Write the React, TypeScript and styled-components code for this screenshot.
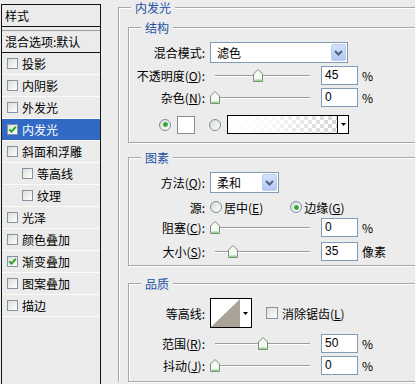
import React from 'react';
import styled, { createGlobalStyle } from 'styled-components';

const BG = '#ececec';

const GlobalStyle = createGlobalStyle`
  html, body { margin: 0; padding: 0; background: ${BG}; }
  body {
    font-family: "Noto Sans CJK SC", "Liberation Sans", sans-serif;
    font-size: 12px;
    color: #000;
  }
  #root { width: 415px; height: 384px; overflow: hidden; }
`;

const Dialog = styled.div`
  display: flex;
  width: 415px;
  height: 384px;
  overflow: hidden;
  background: ${BG};
`;

/* ---------- left list ---------- */
const StylesPanel = styled.div`
  flex: none;
  box-sizing: border-box;
  width: 100px;
  margin: 4px 0 0 1px;
  border: 1px solid #141414;
  border-bottom: none;
  display: flex;
  flex-direction: column;
  background: #ebebeb;
`;

const PanelHeader = styled.div`
  height: 21px;
  line-height: 21px;
  padding-left: 3px;
  border-bottom: 1px solid #141414;
`;

const BlendRow = styled.div`
  margin-top: 3px;
  height: 21px;
  line-height: 21px;
  padding-left: 3px;
  border-top: 1px solid #9a9a9a;
  border-bottom: 1px solid #141414;
  white-space: nowrap;
`;

const StyleItem = styled.div<{ $selected?: boolean; $indent?: boolean }>`
  display: flex;
  align-items: center;
  gap: 4px;
  height: 21px;
  border-bottom: 1px solid #fbfbfb;
  padding-left: ${(p) => (p.$indent ? 20 : 5)}px;
  background: ${(p) => (p.$selected ? '#316ac5' : 'transparent')};
  color: ${(p) => (p.$selected ? '#fff' : '#000')};
  white-space: nowrap;
`;

const CheckBox = styled.span<{ $size: number }>`
  flex: none;
  box-sizing: border-box;
  display: inline-flex;
  align-items: center;
  justify-content: center;
  width: ${(p) => p.$size}px;
  height: ${(p) => p.$size}px;
  border: 1px solid #8394a6;
  background: linear-gradient(135deg, #dcdcd7, #ffffff);
`;

const Check: React.FC<{ checked?: boolean; size?: number }> = ({ checked, size = 11 }) => (
  <CheckBox $size={size}>
    {checked && (
      <svg width="9" height="9" viewBox="0 0 9 9">
        <path d="M1.3 4.3 L3.5 6.6 L7.8 1.9" stroke="#21a121" strokeWidth="1.9" fill="none" />
      </svg>
    )}
  </CheckBox>
);

/* ---------- right settings ---------- */
const Settings = styled.div`
  flex: 1;
  min-width: 0;
  padding: 7px 0 0 17px;
  overflow: hidden;
`;

const OuterGroup = styled.div`
  width: 340px;
  padding-left: 9px;
  border-top: 1px solid #a7a7a7;
  border-left: 1px solid #a7a7a7;
  box-shadow: inset 1px 1px 0 #fff;
  display: flex;
  flex-direction: column;
`;

const GroupTitle = styled.span<{ $ml: number }>`
  align-self: flex-start;
  margin: -7px 0 0 ${(p) => p.$ml}px;
  padding: 0 4px;
  height: 14px;
  line-height: 14px;
  background: ${BG};
  color: #1f52a3;
  white-space: nowrap;
`;

const InnerGroup = styled.div<{ $mt: number; $pb: number }>`
  width: 320px;
  margin-top: ${(p) => p.$mt}px;
  padding-bottom: ${(p) => p.$pb}px;
  border: 1px solid #a7a7a7;
  box-shadow: inset 1px 1px 0 #fff, 1px 1px 0 #fff;
  display: flex;
  flex-direction: column;
`;

const Row = styled.div<{ $h: number; $mt: number }>`
  display: flex;
  align-items: center;
  height: ${(p) => p.$h}px;
  margin-top: ${(p) => p.$mt}px;
  white-space: nowrap;
`;

const ColorRow = styled(Row)`
  padding-left: 30px;
`;

const Label = styled.span`
  flex: none;
  width: 76px;
  margin-right: 5px;
  text-align: right;
  white-space: nowrap;
`;

const Select = styled.div<{ $w: number }>`
  flex: none;
  box-sizing: border-box;
  width: ${(p) => p.$w}px;
  height: 21px;
  border: 1px solid #7f9db9;
  background: #fff;
  display: flex;
  align-items: center;
  padding: 0 1px 0 6px;
`;

const SelectText = styled.span`
  flex: 1;
`;

const DropButton = styled.span`
  flex: none;
  box-sizing: border-box;
  width: 15px;
  height: 17px;
  border: 1px solid #bccdf4;
  border-radius: 2px;
  background: linear-gradient(180deg, #d6e1fb, #b4c8f4);
  display: flex;
  align-items: center;
  justify-content: center;
`;

const Chevron = () => (
  <svg width="9" height="6" viewBox="0 0 9 6">
    <path d="M1 1 L4.5 4.5 L8 1" stroke="#4d6185" strokeWidth="2" fill="none" />
  </svg>
);

const SliderBox = styled.div`
  position: relative;
  flex: none;
  width: 106px;
  height: 19px;
  margin-right: 5px;
`;

const Track = styled.div`
  position: absolute;
  left: 5px;
  right: 6px;
  top: 9px;
  height: 1px;
  background: #9d9d9d;
  box-shadow: 0 1px 0 #fff;
`;

const ThumbSvg = styled.svg`
  position: absolute;
  top: 3px;
  margin-left: -5px;
`;

const NumInput = styled.div`
  flex: none;
  box-sizing: border-box;
  width: 37px;
  height: 19px;
  line-height: 17px;
  padding-left: 3px;
  border: 1px solid #7f9db9;
  background: #fff;
  font-family: "Liberation Sans", sans-serif;
`;

const Unit = styled.span`
  margin-left: 4px;
`;

const RadioCircle = styled.span`
  flex: none;
  box-sizing: border-box;
  width: 12px;
  height: 12px;
  border-radius: 50%;
  border: 1px solid #7d8fa3;
  background: linear-gradient(135deg, #d8d8d2, #ffffff);
  display: inline-flex;
  align-items: center;
  justify-content: center;
`;

const RadioDot = styled.span`
  width: 5px;
  height: 5px;
  border-radius: 50%;
  background: radial-gradient(circle, #2aa52a 30%, #7fd07f 100%);
`;

const Radio: React.FC<{ on?: boolean }> = ({ on }) => (
  <RadioCircle>{on && <RadioDot />}</RadioCircle>
);

const RadioText = styled.span<{ $ml?: number }>`
  margin-left: ${(p) => p.$ml ?? 2}px;
`;

const RadioGap = styled.span<{ $w: number }>`
  flex: none;
  width: ${(p) => p.$w}px;
`;

const Swatch = styled.span`
  flex: none;
  box-sizing: border-box;
  width: 18px;
  height: 18px;
  margin-left: 6px;
  border: 1px solid #8c8c8c;
  background: #fff;
`;

const GradientBox = styled.div`
  flex: none;
  box-sizing: border-box;
  width: 122px;
  height: 19px;
  margin-left: 6px;
  border: 1px solid #000;
  display: flex;
`;

const GradientFill = styled.span`
  flex: 1;
  background:
    linear-gradient(to right, #ffffff 0%, rgba(255, 255, 255, 0.85) 40%, rgba(255, 255, 255, 0) 100%),
    repeating-conic-gradient(#d4d4d4 0 25%, #ffffff 0 50%) 0 0 / 8px 8px;
`;

const ArrowCell = styled.span<{ $bl?: boolean }>`
  flex: none;
  width: 10px;
  background: #fff;
  border-left: ${(p) => (p.$bl ? '1px solid #000' : 'none')};
  display: flex;
  align-items: center;
  justify-content: center;
`;

const DownTri = () => (
  <svg width="5" height="3" viewBox="0 0 5 3">
    <path d="M0 0 L5 0 L2.5 3 Z" fill="#000" />
  </svg>
);

const ContourBox = styled.div`
  flex: none;
  box-sizing: border-box;
  width: 42px;
  height: 30px;
  border: 1px solid #000;
  background: #fff;
  display: flex;
`;

const CheckLabel = styled.span`
  margin-left: 4px;
`;

const AntiAlias = styled.span`
  display: inline-flex;
  align-items: center;
  margin-left: 14px;
`;

const Thumb: React.FC<{ pct: number }> = ({ pct }) => (
  <ThumbSvg width="10" height="13" viewBox="0 0 10 13" style={{ left: `${5 + pct * 95}px` }}>
    <path d="M5 0.5 L9.5 5 L9.5 12.5 L0.5 12.5 L0.5 5 Z" fill="#f5fbf2" stroke="#7c8a7c" />
    <path d="M1.5 11.3 L8.5 11.3" stroke="#8fd48f" strokeWidth="1.6" />
  </ThumbSvg>
);

const SliderRow: React.FC<{
  label: React.ReactNode;
  value: string;
  pct: number;
  unit: string;
  mt: number;
}> = ({ label, value, pct, unit, mt }) => (
  <Row $h={19} $mt={mt}>
    <Label>{label}</Label>
    <SliderBox>
      <Track />
      <Thumb pct={pct} />
    </SliderBox>
    <NumInput>{value}</NumInput>
    <Unit>{unit}</Unit>
  </Row>
);

const items: { label: string; checked?: boolean; selected?: boolean; indent?: boolean }[] = [
  { label: '投影' },
  { label: '内阴影' },
  { label: '外发光' },
  { label: '内发光', checked: true, selected: true },
  { label: '斜面和浮雕' },
  { label: '等高线', indent: true },
  { label: '纹理', indent: true },
  { label: '光泽' },
  { label: '颜色叠加' },
  { label: '渐变叠加', checked: true },
  { label: '图案叠加' },
  { label: '描边' },
];

export default function App() {
  return (
    <>
      <GlobalStyle />
      <Dialog>
        <StylesPanel>
          <PanelHeader>样式</PanelHeader>
          <BlendRow>混合选项:默认</BlendRow>
          {items.map((it) => (
            <StyleItem key={it.label} $selected={it.selected} $indent={it.indent}>
              <Check checked={it.checked} />
              <span>{it.label}</span>
            </StyleItem>
          ))}
        </StylesPanel>

        <Settings>
          <OuterGroup>
            <GroupTitle $ml={3}>内发光</GroupTitle>

            <InnerGroup $mt={12} $pb={8}>
              <GroupTitle $ml={12}>结构</GroupTitle>
              <Row $h={21} $mt={7}>
                <Label>混合模式:</Label>
                <Select $w={138}>
                  <SelectText>滤色</SelectText>
                  <DropButton>
                    <Chevron />
                  </DropButton>
                </Select>
              </Row>
              <SliderRow
                mt={3}
                label={<>不透明度(<u>O</u>):</>}
                value="45"
                pct={0.45}
                unit="%"
              />
              <SliderRow mt={3} label={<>杂色(<u>N</u>):</>} value="0" pct={0} unit="%" />
              <ColorRow $h={19} $mt={8}>
                <Radio on />
                <Swatch />
                <RadioGap $w={14} />
                <Radio />
                <GradientBox>
                  <GradientFill />
                  <ArrowCell $bl>
                    <DownTri />
                  </ArrowCell>
                </GradientBox>
              </ColorRow>
            </InnerGroup>

            <InnerGroup $mt={14} $pb={4}>
              <GroupTitle $ml={12}>图素</GroupTitle>
              <Row $h={21} $mt={7}>
                <Label>方法(<u>Q</u>):</Label>
                <Select $w={69}>
                  <SelectText>柔和</SelectText>
                  <DropButton>
                    <Chevron />
                  </DropButton>
                </Select>
              </Row>
              <Row $h={22} $mt={3}>
                <Label>源:</Label>
                <Radio />
                <RadioText>居中(<u>E</u>)</RadioText>
                <RadioGap $w={27} />
                <Radio on />
                <RadioText>边缘(<u>G</u>)</RadioText>
              </Row>
              <SliderRow mt={0} label={<>阻塞(<u>C</u>):</>} value="0" pct={0} unit="%" />
              <SliderRow mt={5} label={<>大小(<u>S</u>):</>} value="35" pct={0.19} unit="像素" />
            </InnerGroup>

            <InnerGroup $mt={17} $pb={6}>
              <GroupTitle $ml={12}>品质</GroupTitle>
              <Row $h={30} $mt={7}>
                <Label>等高线:</Label>
                <ContourBox>
                  <svg width="29" height="28" viewBox="0 0 29 28">
                    <path d="M0 28 L29 0 L29 28 Z" fill="#a9a497" />
                  </svg>
                  <ArrowCell>
                    <DownTri />
                  </ArrowCell>
                </ContourBox>
                <AntiAlias>
                  <Check size={12} />
                  <CheckLabel>消除锯齿(<u>L</u>)</CheckLabel>
                </AntiAlias>
              </Row>
              <SliderRow mt={6} label={<>范围(<u>R</u>):</>} value="50" pct={0.5} unit="%" />
              <SliderRow mt={3} label={<>抖动(<u>J</u>):</>} value="0" pct={0} unit="%" />
            </InnerGroup>
          </OuterGroup>
        </Settings>
      </Dialog>
    </>
  );
}
